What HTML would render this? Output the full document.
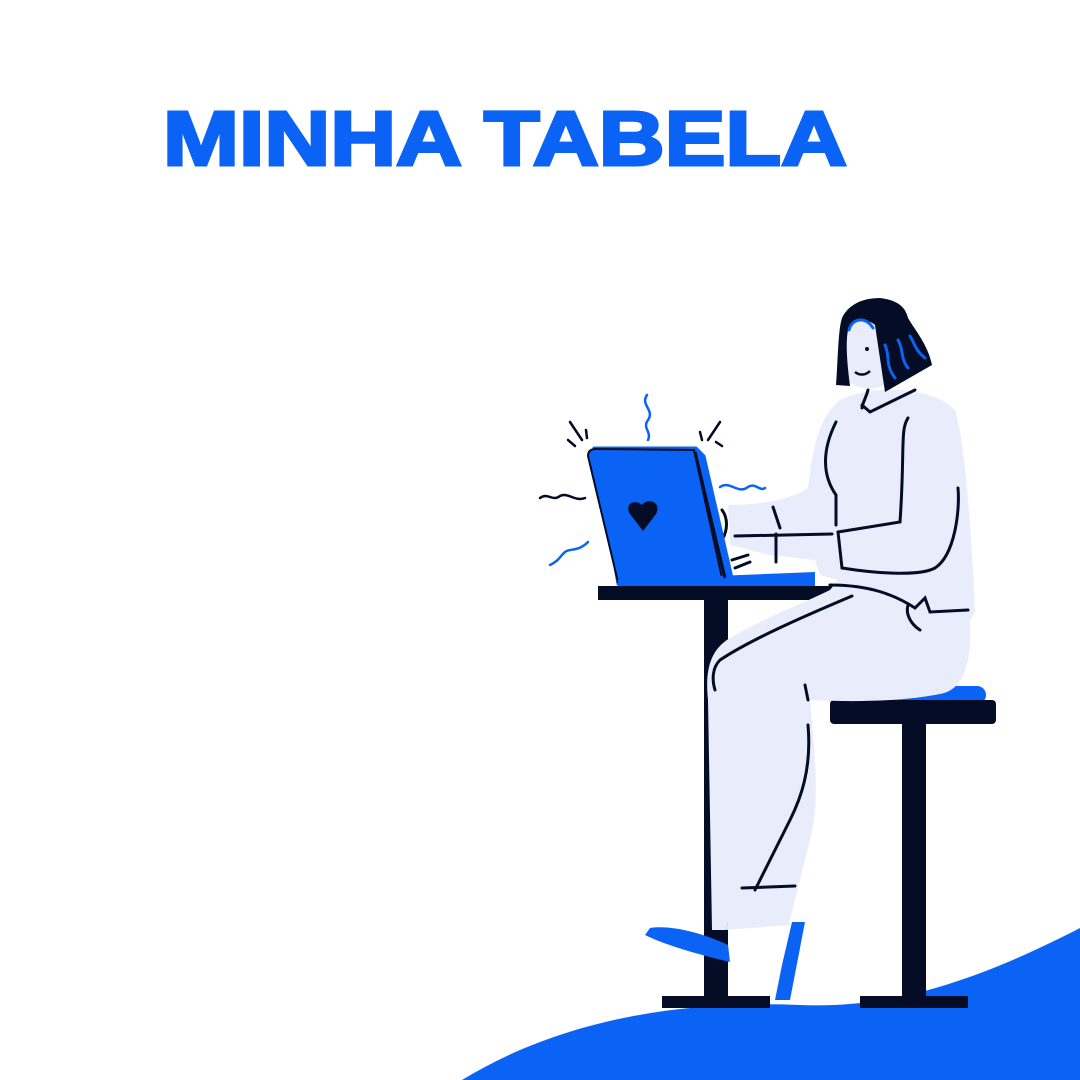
<!DOCTYPE html>
<html><head><style>
html,body{margin:0;padding:0;background:#fff;}
svg{display:block}
</style></head><body>
<svg width="1080" height="1080" viewBox="0 0 1080 1080" xmlns="http://www.w3.org/2000/svg">
<rect width="1080" height="1080" fill="#fff"/>
<text x="163" y="165" font-family="Liberation Sans, sans-serif" font-weight="700" font-size="77" fill="#0b63f6" stroke="#0b63f6" stroke-width="3" textLength="684" lengthAdjust="spacingAndGlyphs">MINHA TABELA</text>
<!-- ground -->
<path d="M462 1080 C560 1020 680 1000 800 1005 C880 1008 960 990 1080 928 L1080 1080 Z" fill="#0b63f6"/>
<!-- stool -->
<rect x="838" y="686" width="148" height="18" rx="9" fill="#0b63f6"/>
<rect x="830" y="700" width="166" height="24" rx="4" fill="#050c25"/>
<rect x="902" y="720" width="24" height="280" fill="#050c25"/>
<rect x="860" y="996" width="108" height="12" fill="#050c25"/>
<!-- table -->
<rect x="598" y="586" width="240" height="14" fill="#050c25"/>
<rect x="704" y="598" width="24" height="400" fill="#050c25"/>
<rect x="662" y="996" width="108" height="12" fill="#050c25"/>
<!-- body -->
<path d="M840 400 C870 385 930 385 955 410 C965 440 972 540 975 612 L970 620 C972 660 965 690 940 694 C900 702 850 702 810 700 C815 760 820 800 810 840 L790 920 L765 925 L760 890 L740 890 L725 930 L712 930 L708 700 C705 670 710 650 730 638 C770 615 800 605 830 590 L838 580 L820 575 L815 560 L770 555 L730 545 L728 505 C760 505 790 500 808 488 C812 460 815 420 840 400 Z" fill="#e9ecfb"/>
<path d="M740 890 L725 930 L790 925 L778 885 Z" fill="#e9ecfb"/>
<!-- shoes -->
<path d="M650 928 C670 925 700 932 728 945 L730 962 C700 955 665 945 645 935 Z" fill="#0b63f6"/>
<path d="M792 922 L805 922 L790 1000 L775 1000 L782 965 Z" fill="#0b63f6"/>
<!-- body lines -->
<g fill="none" stroke="#050c25" stroke-width="3" stroke-linecap="round">
<path d="M836 422 C822 450 822 475 836 495 L836 525"/>
<path d="M908 418 C900 430 905 450 900 522 L838 532"/>
<path d="M838 532 L842 568 C880 574 920 576 935 568 C955 555 960 510 958 488"/>
<path d="M735 536 L832 534"/>
<path d="M773 507 L780 528"/>
<path d="M776 534 L776 562"/>
<path d="M830 585 C870 585 895 595 915 608 L925 598 L930 612 L968 610"/>
<path d="M908 605 C905 615 912 625 920 630"/>
<path d="M852 596 C800 618 750 640 720 660 C712 668 712 680 715 690"/>
<path d="M808 725 C812 770 800 800 790 820 L755 890"/>
<path d="M742 888 L795 886"/>
<path d="M805 685 L808 700"/>
<path d="M862 405 L870 412 L915 390"/>
<path d="M868 390 C866 398 862 404 862 408"/>
<path d="M722 510 C728 518 728 530 722 540"/>
<path d="M732 560 L748 555 M735 568 L750 562"/>
</g>
<!-- head -->
<path d="M845 325 C848 315 870 312 880 320 L885 385 C870 392 855 388 848 380 Z" fill="#e9ecfb"/>
<path d="M836 385 C838 360 838 330 842 318 C848 305 862 298 880 298 C895 300 905 305 908 318 C915 330 928 345 932 365 L885 392 L875 325 C868 318 852 320 848 330 C845 345 848 370 850 386 Z" fill="#050c25"/>
<g fill="none" stroke="#0b63f6" stroke-width="3" stroke-linecap="round">
<path d="M849 330 C852 318 866 316 873 328"/>
<path d="M885 345 C890 355 885 365 895 378"/>
<path d="M898 340 C904 350 900 358 908 368"/>
<path d="M910 336 C915 344 915 350 925 358"/>
</g>
<path d="M855 372 C860 376 866 375 870 371" stroke="#050c25" stroke-width="2.5" fill="none"/>
<circle cx="867" cy="349" r="2" fill="#050c25"/>
<!-- laptop -->
<path d="M594 448 L696 448 L704 456 L732 578 L618 584 Z" fill="#0b63f6" stroke="#0b63f6" stroke-width="3" stroke-linejoin="round"/>
<path d="M588 456 Q588 449 596 449 L694 450 L722 578 L618 582 Z" fill="#0b63f6" stroke="#050c25" stroke-width="2"/>
<path d="M618 580 L815 572 L815 586 L618 586 Z" fill="#0b63f6"/>
<path d="M695 452 L725 578" stroke="#050c25" stroke-width="3"/>
<path d="M643 531 L630 514 C624 505 634 498 642 505 C648 497 662 502 656 514 Z" fill="#050c25"/>
<!-- squiggles -->
<g fill="none" stroke-width="2.5" stroke-linecap="round">
<path d="M647 395 C640 405 655 410 648 420 C642 428 652 432 648 440" stroke="#0b63f6"/>
<path d="M720 487 C730 480 738 495 748 487 C755 482 760 492 765 488" stroke="#0b63f6"/>
<path d="M550 565 C560 560 560 556 565 552 C570 548 578 552 588 542" stroke="#0b63f6"/>
<path d="M540 498 C548 492 552 502 560 496 C568 492 575 502 585 498" stroke="#050c25"/>
<path d="M570 422 L582 440 M568 440 L575 446 M586 430 L587 438" stroke="#050c25"/>
<path d="M720 422 L708 440 M700 432 L702 440 M716 442 L722 446" stroke="#050c25"/>
</g>
</svg>
</body></html>
